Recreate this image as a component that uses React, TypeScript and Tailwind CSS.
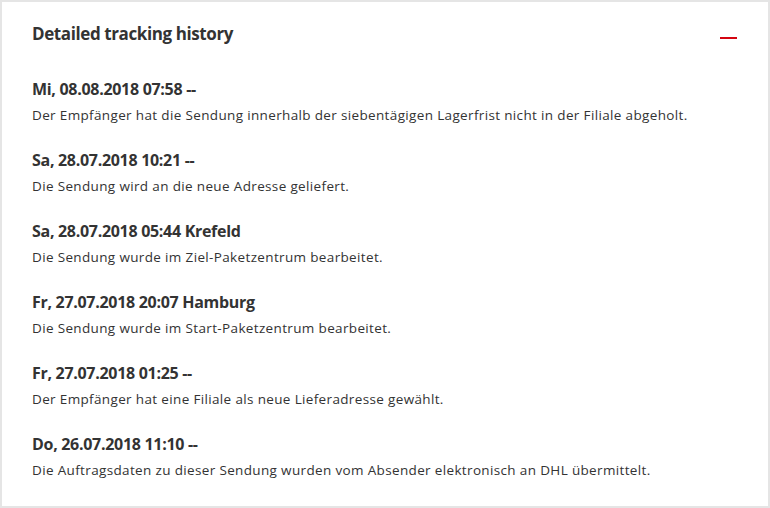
import React from "react";

const entries = [
  { h: "Mi, 08.08.2018 07:58 --", t: "Der Empfänger hat die Sendung innerhalb der siebentägigen Lagerfrist nicht in der Filiale abgeholt." },
  { h: "Sa, 28.07.2018 10:21 --", t: "Die Sendung wird an die neue Adresse geliefert." },
  { h: "Sa, 28.07.2018 05:44 Krefeld", t: "Die Sendung wurde im Ziel-Paketzentrum bearbeitet." },
  { h: "Fr, 27.07.2018 20:07 Hamburg", t: "Die Sendung wurde im Start-Paketzentrum bearbeitet." },
  { h: "Fr, 27.07.2018 01:25 --", t: "Der Empfänger hat eine Filiale als neue Lieferadresse gewählt." },
  { h: "Do, 26.07.2018 11:10 --", t: "Die Auftragsdaten zu dieser Sendung wurden vom Absender elektronisch an DHL übermittelt." },
];

export default function App() {
  return (
    <div className="w-[770px] h-[508px] bg-white border-2 border-[#e5e5e5] text-[#333333] font-['Open_Sans',sans-serif]">
      <div className="flex items-center justify-between pl-[30px] pr-[31px] pt-[20px]">
        <h2 className="text-[17px] font-bold tracking-[-0.4px] leading-[24px]">Detailed tracking history</h2>
        <div className="w-[17px] h-[2px] bg-[#d40511] mt-[8px]" />
      </div>
      <div className="flex flex-col gap-[23px] pl-[30px] pt-[32px]">
        {entries.map((e) => (
          <div key={e.h} className="flex flex-col">
            <div className="text-[16px] font-bold tracking-[-0.3px] leading-[22px]">{e.h}</div>
            <div className="text-[13.5px] leading-[22px] tracking-[0.35px] mt-[4px]">{e.t}</div>
          </div>
        ))}
      </div>
    </div>
  );
}
